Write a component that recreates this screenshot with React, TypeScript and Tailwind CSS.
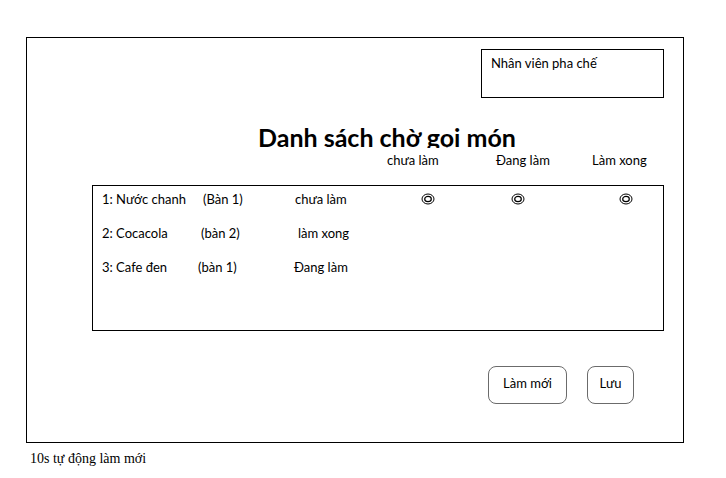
import { FC } from "react";

const Radio: FC = () => {
  return (
    <svg width="14" height="12" viewBox="0 0 14 12" className="block">
      <ellipse cx="7" cy="6" rx="6" ry="5" fill="none" stroke="#000" strokeWidth="1" />
      <ellipse cx="7" cy="6" rx="3.3" ry="2.6" fill="none" stroke="#000" strokeWidth="1.2" />
    </svg>
  );
};

const App: FC = () => {
  return (
    <div className="w-[726px] h-[478px] bg-white text-black font-['Lato','Noto_Sans',sans-serif] overflow-hidden">
      <div className="ml-[26px] mt-[37px] w-[658px] h-[406px] border border-black flex flex-col">
        <div className="self-end mr-[19px] mt-[11px] w-[183px] h-[49px] border border-black pl-[9px] pt-[4px] text-[13px]">
          Nhân viên pha chế
        </div>

        <div className="ml-[231px] mt-[24px] h-[26px] overflow-hidden text-[25px] leading-[30px] font-bold">
          Danh sách chờ gọi món
        </div>

        <div className="flex mt-[3px] h-[18px] text-[13px] leading-[18px]">
          <span className="ml-[360px] w-[109px]">chưa làm</span>
          <span className="w-[96px]">Đang làm</span>
          <span>Làm xong</span>
        </div>

        <div className="ml-[65px] mt-[16px] w-[572px] h-[146px] border border-black text-[13px] leading-[18px] pt-[4px]">
          <div className="flex items-center h-[18px]">
            <span className="ml-[9px] w-[101px]">1: Nước chanh</span>
            <span className="w-[92px]">(Bàn 1)</span>
            <span className="w-[126px]">chưa làm</span>
            <div className="flex items-center">
              <Radio />
              <span className="w-[76px]" />
              <Radio />
              <span className="w-[94px]" />
              <Radio />
            </div>
          </div>
          <div className="flex items-center h-[18px] mt-[16px]">
            <span className="ml-[9px] w-[99px]">2: Cocacola</span>
            <span className="w-[97px]">(bàn 2)</span>
            <span>làm xong</span>
          </div>
          <div className="flex items-center h-[18px] mt-[16px]">
            <span className="ml-[9px] w-[96px]">3: Cafe đen</span>
            <span className="w-[96px]">(bàn 1)</span>
            <span>Đang làm</span>
          </div>
        </div>

        <div className="flex mt-[35px] ml-[461px] gap-[20px] text-[13px]">
          <button className="w-[79px] h-[38px] border-[1.5px] border-[#6b6b6b] rounded-[8px] bg-white flex items-center justify-center pb-[3px]">
            Làm mới
          </button>
          <button className="w-[47px] h-[38px] border-[1.5px] border-[#6b6b6b] rounded-[8px] bg-white flex items-center justify-center pb-[3px]">
            Lưu
          </button>
        </div>
      </div>
      <div className="ml-[30px] mt-[7px] text-[14px] leading-[18px] font-['Liberation_Serif','Times_New_Roman',serif]">
        10s tự động làm mới
      </div>
    </div>
  );
};

export default App;
